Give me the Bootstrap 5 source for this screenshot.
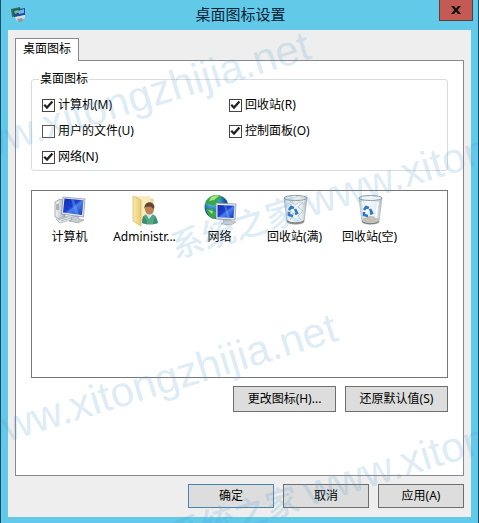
<!DOCTYPE html>
<html lang="zh-CN">
<head>
<meta charset="utf-8">
<meta name="viewport" content="width=device-width, initial-scale=1">
<title>桌面图标设置</title>
<link href="https://cdn.jsdelivr.net/npm/bootstrap@5.3.0/dist/css/bootstrap.min.css" rel="stylesheet">
<style>
body{font-family:"Noto Sans","Noto Sans CJK SC",sans-serif;font-size:12px;line-height:16px;color:#000}
.win{min-height:100vh;background:#63c9e9;border:solid #16506a;border-width:0 1px;padding:0 7px 7px;overflow:hidden}
.titlebar{height:30px}
.titlebar h1{font-size:15px;line-height:20px;color:#0b2233}
.app-icon{width:18px;height:18px;margin:5px 0 0 1px}
.close-btn{width:34px;height:21px;margin-right:-2px;background:#c35b54;border:1px solid #55403f;border-top:0;padding:0;line-height:0}
.side{width:34px}
.client{background:#eee;padding:8px 7px 9px}
.tabs-line{margin-bottom:-1px;z-index:1}
.tab-btn{height:23px;padding:0 7px 2px;background:#fff;border:1px solid #8b8791;border-bottom:0}
.pane{background:#fff;border:1px solid #8b8791;padding:10px 15px 15px}
.group{border:1px solid #d8dcde;border-radius:3px;padding:5px 7px 0}
.group legend{float:none;width:auto;margin:0;padding:0 1px;font-size:12px;line-height:16px}
.checks{display:grid;grid-template-columns:9fr 10fr;padding:0 3px}
.check-line{height:26px;gap:3px}
.check-line .form-check-input{width:13px;height:13px;margin:0;border:1px solid #555;border-radius:0;background-color:#fff;flex:none}
.check-line .form-check-input:checked{background-color:#fff;border-color:#444;background-size:13px 13px;background-image:url("data:image/svg+xml,%3Csvg xmlns='http://www.w3.org/2000/svg' viewBox='0 0 13 13'%3E%3Cpath d='M2.2 5.8 5 8.6 10.4 2.4' fill='none' stroke='%23222' stroke-width='2.3'/%3E%3C/svg%3E")}
.icon-list{border:1px solid #777;min-height:188px;margin-top:19px;padding:2px 0}
.icon-cell{width:75px;border:0;background:none;padding:0}
.icon-cell svg{width:34px;height:34px}
.icon-cell span{line-height:20px}
.btn-face{background:#ddd;border:1px solid #6e6e6e;border-radius:0;padding:0;font-size:12px;line-height:16px;color:#000;width:86px;height:24px}
.btn-wide{width:103px;height:26px}
.btn-main{border-color:#4a86b4}
.actions{gap:9px}
.wm{left:0;top:0;width:100%;height:100%;overflow:hidden;pointer-events:none;z-index:5}
.wm text{font:400 42px "Liberation Sans",sans-serif;fill:#4a9ccd;fill-opacity:.21}
.wm .han{font:500 33px "Noto Sans CJK SC",sans-serif}
</style>
<script src="https://cdn.jsdelivr.net/npm/bootstrap@5.3.0/dist/js/bootstrap.bundle.min.js"></script>
</head>
<body>
<main class="win position-relative">
  <header class="titlebar d-flex justify-content-between align-items-start">
    <div class="side"><svg class="app-icon d-block" viewBox="0 0 18 18"><path d="M2 4 11 2l1 9-9 1z" fill="#26734c"/><path d="M4 5 16 3v7L5 12z" fill="#2546a0"/><path d="M5 6 9 5l2 2-5 2z" fill="#6fc65a"/><path d="m9 6 6-2v4l-5 1z" fill="#6fb6e8"/><path d="m6 12 10-2v3l-8 3z" fill="#d8dce0"/><path d="m8 14 5-1 1 3-4 1z" fill="#9b938d"/></svg></div>
    <h1 class="m-0 pt-1 fw-normal">桌面图标设置</h1>
    <button type="button" class="close-btn d-flex justify-content-center align-items-center" aria-label="关闭"><svg width="10" height="8" viewBox="0 0 10 8"><path d="M0 0h3l2 2.5L7 0h3L6.600 4 10 8H7L5 5.500 3 8H0l3.400-4z" fill="#111"/></svg></button>
  </header>

  <div class="client">
    <div class="tabs-line d-flex position-relative" role="tablist"><button type="button" class="tab-btn" role="tab" aria-selected="true">桌面图标</button></div>
    <section class="pane" role="tabpanel">
      <fieldset class="group">
        <legend>桌面图标</legend>
        <div class="checks">
          <div class="check-line d-flex align-items-center"><input class="form-check-input" type="checkbox" id="c1" checked><label for="c1">计算机(M)</label></div>
          <div class="check-line d-flex align-items-center"><input class="form-check-input" type="checkbox" id="c2" checked><label for="c2">回收站(R)</label></div>
          <div class="check-line d-flex align-items-center"><input class="form-check-input" type="checkbox" id="c3"><label for="c3">用户的文件(U)</label></div>
          <div class="check-line d-flex align-items-center"><input class="form-check-input" type="checkbox" id="c4" checked><label for="c4">控制面板(O)</label></div>
          <div class="check-line d-flex align-items-center"><input class="form-check-input" type="checkbox" id="c5" checked><label for="c5">网络(N)</label></div>
        </div>
      </fieldset>

      <div class="icon-list d-flex flex-wrap align-items-start align-content-start">
        <button type="button" class="icon-cell d-flex flex-column align-items-center">
          <svg viewBox="0 0 34 34"><defs><linearGradient id="scr" x1="0" y1="0" x2="1" y2="1"><stop offset="0" stop-color="#152fb0"/><stop offset=".45" stop-color="#1a3fd0"/><stop offset=".55" stop-color="#4b80ea"/><stop offset="1" stop-color="#1238b8"/></linearGradient><linearGradient id="metal" x1="0" x2="1"><stop offset="0" stop-color="#f4f6f8"/><stop offset="1" stop-color="#a9b1b9"/></linearGradient></defs><path d="m2 9 5-3 5 2v16l-5 2-5-2z" fill="url(#metal)" stroke="#8b949c" stroke-width=".7"/><path d="M3 12h3M3 14h3M3 16h3" stroke="#777f88"/><path d="m3 26 13-3 5 3-14 4z" fill="#e7ebee" stroke="#9ba4ab" stroke-width=".6"/><path d="m5 27 10-3M8 28l10-3" stroke="#98a1aa" stroke-width=".7"/><path d="m18 24 7-1 1 3 5 1-6 3-9-2 3-1z" fill="#c5cbd0" stroke="#848c93" stroke-width=".5"/><path d="M10 4 32 6l-1.500 18L8.500 21z" fill="#e2e6ea" stroke="#848f9b" stroke-width=".7"/><path d="m11.500 5.500 19 1.700L29 22 10 19.500z" fill="url(#scr)"/><path d="m18 6 3 .3 5 15-4-.5z" fill="#72aafa" opacity=".4"/></svg>
          <span>计算机</span></button>
        <button type="button" class="icon-cell d-flex flex-column align-items-center">
          <svg viewBox="0 0 34 34"><defs><linearGradient id="fold" x1="0" x2="1"><stop offset="0" stop-color="#f9e9ac"/><stop offset="1" stop-color="#e9cb70"/></linearGradient></defs><path d="M7 4h10l2 2h6v22H7z" fill="#f0dfa0" stroke="#dcc682" stroke-width=".6"/><path d="m9 4 13-1v24H9z" fill="#f8ebb8"/><path d="m5 3 8 4v26l-8-5z" fill="url(#fold)" stroke="#d2b665" stroke-width=".7"/><path d="M14 30c0-8 3-9 8-9s7 3 8 9c-5 2-11 2-16 0z" fill="#54a782"/><path d="m18 21 3 5 4-5-1-3h-5z" fill="#d7e9f2"/><path d="m14 30 1-7c3 2 4 4 4 8zM30 30l-3-7-2 8z" fill="#3d8c72"/><ellipse cx="21.500" cy="16" rx="4.500" ry="5.500" fill="#bd8154"/><path d="M16.500 16c-1-8 9-9 10-2l-1 2c-2-3-5-3-8-2z" fill="#624431"/></svg>
          <span>Administr...</span></button>
        <button type="button" class="icon-cell d-flex flex-column align-items-center">
          <svg viewBox="0 0 34 34"><defs><radialGradient id="globe" cx=".35" cy=".25"><stop offset="0" stop-color="#c6f0ff"/><stop offset=".5" stop-color="#3e9ed7"/><stop offset="1" stop-color="#15588e"/></radialGradient></defs><circle cx="13.500" cy="14" r="12" fill="url(#globe)"/><path d="M7 4c5-3 9-2 12 0l-4 3 1 3-6 3-4-2-4 1c0-3 2-6 5-8zM3 16l6 0 5 4-2 6c-5-1-8-5-9-10z" fill="#38a747"/><path d="M8 4c4-2 7-2 8-1l-5 4-5 1zM5 17l5 1-1 3z" fill="#a5e383"/><path d="m20 26 7 0 1 2 5 1-5 3-10-1 3-2z" fill="#c8cdd1" stroke="#899198" stroke-width=".5"/><path d="m13 10 20 1-1 16-19-1z" fill="#e5e9ed" stroke="#868f99" stroke-width=".7"/><path d="m14.500 12 17 .8-1 12.200-16-.8z" fill="url(#scr)"/><path d="m21 12 2 0 4 13-3 0z" fill="#75aafa" opacity=".4"/></svg>
          <span>网络</span></button>
        <button type="button" class="icon-cell d-flex flex-column align-items-center">
          <svg viewBox="0 0 34 34"><defs><linearGradient id="glass" x1="0" x2="1"><stop offset="0" stop-color="#bdcbd6"/><stop offset=".3" stop-color="#f7fbfd"/><stop offset=".75" stop-color="#e7eff4"/><stop offset="1" stop-color="#a8b8c3"/></linearGradient></defs><path d="m6 5 3 24c3 3 14 3 17 0l3-24z" fill="url(#glass)" stroke="#a2afb9" stroke-width=".7"/><path d="m9 27 0 2c3 3 14 3 17 0l0-2c-4 3-13 3-17 0z" fill="#858988"/><path d="m7 5 5-2 4 2 5-3 3 3 4 0-2 6-4-2-5 3-4-3-5 2z" fill="#e4e9ec" stroke="#b4bfc7" stroke-width=".6"/><path d="m9 10 5 2-3 5 5 4-4 6M25 9l-5 5 5 4-5 5 3 4" fill="none" stroke="#bec8cf"/><ellipse cx="17.500" cy="5" rx="11.500" ry="2.500" fill="none" stroke="#8e9da9"/><g fill="none" stroke="#2f78c6" stroke-width="2.600"><path d="m11 17 2-3 3 1M17 16l2 4-2 1M15 23l-4-1 0-3"/></g></svg>
          <span>回收站(满)</span></button>
        <button type="button" class="icon-cell d-flex flex-column align-items-center">
          <svg viewBox="0 0 34 34"><path d="m6 5 3 24c3 3 14 3 17 0l3-24z" fill="url(#glass)" stroke="#acb8c1" stroke-width=".7"/><path d="M9 26c4-4 13-4 17 0l0 3c-3 3-14 3-17 0z" fill="#c2c2ba"/><path d="m9 28 0 1c3 3 14 3 17 0l0-1c-4 3-13 3-17 0z" fill="#777c7b"/><ellipse cx="17.500" cy="5" rx="11.500" ry="2.500" fill="#edf3f7" stroke="#8e9da9"/><path d="m10 9 2 16M25 9l-2 16" stroke="#fff" stroke-width="1.500"/><g fill="none" stroke="#2f78c6" stroke-width="2.600"><path d="m11 17 2-3 3 1M17 16l2 4-2 1M15 23l-4-1 0-3"/></g></svg>
          <span>回收站(空)</span></button>
      </div>

      <div class="actions d-flex justify-content-end mt-2 mb-5">
        <button type="button" class="btn btn-face btn-wide">更改图标(H)...</button>
        <button type="button" class="btn btn-face btn-wide">还原默认值(S)</button>
      </div>
    </section>
    <div class="actions d-flex justify-content-end mt-2">
      <button type="button" class="btn btn-face btn-main">确定</button>
      <button type="button" class="btn btn-face">取消</button>
      <button type="button" class="btn btn-face">应用(A)</button>
    </div>
  </div>

  <svg class="wm position-absolute" aria-hidden="true">
    <text text-anchor="end" transform="translate(312 58) rotate(-17)">www.xitongzhijia.net</text>
    <text class="han" transform="translate(174 259) rotate(-17)">系统之家</text>
    <text transform="translate(309 217) rotate(-17)">www.xitongzhijia.net</text>
    <text text-anchor="end" transform="translate(339 340) rotate(-17)">www.xitongzhijia.net</text>
    <text class="han" transform="translate(174 548) rotate(-17)">系统之家</text>
    <text transform="translate(308 506) rotate(-17)">www.xitongzhijia.net</text>
  </svg>
</main>
</body>
</html>
